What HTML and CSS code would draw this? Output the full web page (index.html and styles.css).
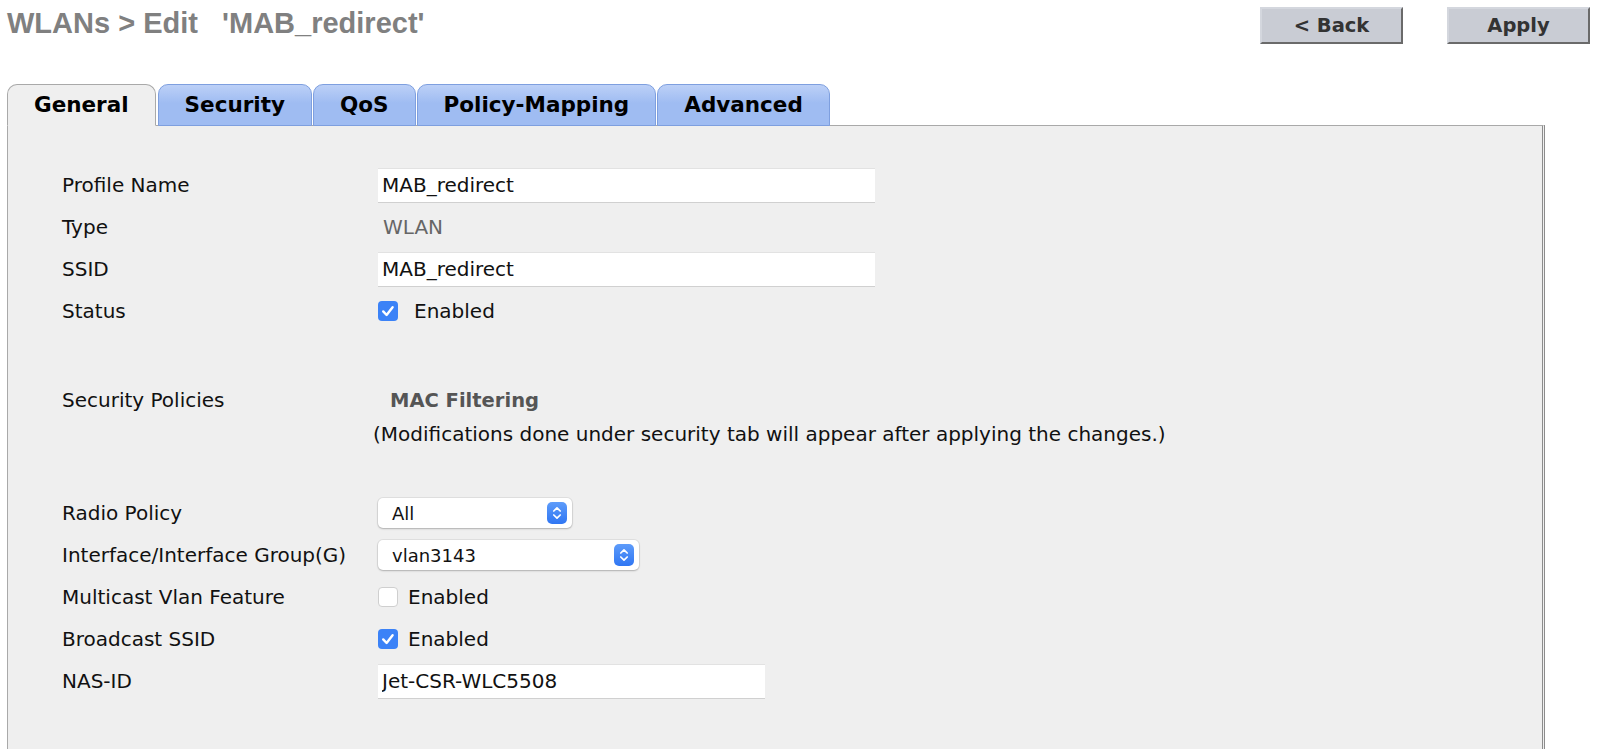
FILE: index.html
```html
<!DOCTYPE html>
<html lang="en">
<head>
    <meta charset="UTF-8">
    <meta name="viewport" content="width=device-width, initial-scale=1.0">
    <title>WLANs &gt; Edit</title>
    <link rel="stylesheet" href="styles.css">
</head>
<body>

    <!-- Page header -->
    <div class="header">
        <h1 class="title">WLANs &gt; Edit&nbsp;&nbsp;&nbsp;'MAB_redirect'</h1>
        <div class="actions">
            <button class="btn">&lt; Back</button>
            <button class="btn">Apply</button>
        </div>
    </div>

    <!-- Tabs -->
    <div class="tabs">
        <div class="tab active">General</div>
        <div class="tab">Security</div>
        <div class="tab">QoS</div>
        <div class="tab">Policy-Mapping</div>
        <div class="tab">Advanced</div>
    </div>

    <!-- General tab content -->
    <div class="panel">
        <div class="row">
            <div class="label">Profile Name</div>
            <div class="value"><input class="field" type="text" value="MAB_redirect"></div>
        </div>
        <div class="row">
            <div class="label">Type</div>
            <div class="value"><span class="static">WLAN</span></div>
        </div>
        <div class="row">
            <div class="label">SSID</div>
            <div class="value"><input class="field" type="text" value="MAB_redirect"></div>
        </div>
        <div class="row">
            <div class="label">Status</div>
            <div class="value check-wrap wide">
                <span class="check on">
                    <svg width="20" height="20" viewBox="0 0 20 20"><path d="M5.2 10.4 L8.6 14 L14.6 6.2" fill="none" stroke="#fff" stroke-width="2.4" stroke-linecap="round" stroke-linejoin="round"/></svg>
                </span>
                <span>Enabled</span>
            </div>
        </div>

        <div class="row policies">
            <div class="label">Security Policies</div>
            <div class="value"><span class="policy">MAC Filtering</span></div>
        </div>
        <div class="note">(Modifications done under security tab will appear after applying the changes.)</div>

        <div class="row first-after-note">
            <div class="label">Radio Policy</div>
            <div class="value">
                <div class="select short">
                    <span>All</span>
                    <span class="arrows">
                        <svg width="20" height="22" viewBox="0 0 20 22"><path d="M6.8 9 L10 5.8 L13.2 9 M6.8 13 L10 16.2 L13.2 13" fill="none" stroke="#fff" stroke-width="1.7" stroke-linecap="round" stroke-linejoin="round"/></svg>
                    </span>
                </div>
            </div>
        </div>
        <div class="row">
            <div class="label">Interface/Interface Group(G)</div>
            <div class="value">
                <div class="select long">
                    <span>vlan3143</span>
                    <span class="arrows">
                        <svg width="20" height="22" viewBox="0 0 20 22"><path d="M6.8 9 L10 5.8 L13.2 9 M6.8 13 L10 16.2 L13.2 13" fill="none" stroke="#fff" stroke-width="1.7" stroke-linecap="round" stroke-linejoin="round"/></svg>
                    </span>
                </div>
            </div>
        </div>
        <div class="row">
            <div class="label">Multicast Vlan Feature</div>
            <div class="value check-wrap">
                <span class="check"></span>
                <span>Enabled</span>
            </div>
        </div>
        <div class="row">
            <div class="label">Broadcast SSID</div>
            <div class="value check-wrap">
                <span class="check on">
                    <svg width="20" height="20" viewBox="0 0 20 20"><path d="M5.2 10.4 L8.6 14 L14.6 6.2" fill="none" stroke="#fff" stroke-width="2.4" stroke-linecap="round" stroke-linejoin="round"/></svg>
                </span>
                <span>Enabled</span>
            </div>
        </div>
        <div class="row">
            <div class="label">NAS-ID</div>
            <div class="value"><input class="field nas" type="text" value="Jet-CSR-WLC5508"></div>
        </div>
    </div>

</body>
</html>
```

FILE: styles.css
```css
/* Basic Layout */
body {
    margin: 0;
    background: #fff;
    font-family: "DejaVu Sans", Verdana, sans-serif;
    color: #111;
    overflow: hidden;
}

/* Header */
.header {
    display: flex;
    justify-content: space-between;
    align-items: flex-start;
    height: 84px;
    padding: 0 10px 0 7px;
}

.title {
    margin: 0;
    padding-top: 7px;
    font-family: "Liberation Sans", Arial, sans-serif;
    font-size: 29px;
    line-height: 32px;
    font-weight: bold;
    color: #808080;
}

.actions {
    display: flex;
    gap: 44px;
    margin-top: 7px;
}

.btn {
    width: 143px;
    height: 37px;
    background: #c9ccd4;
    border: 2px solid;
    border-color: #d4d7de #6a6a6a #6a6a6a #d4d7de;
    font-family: "DejaVu Sans", Verdana, sans-serif;
    font-size: 19.5px;
    font-weight: bold;
    color: #333;
    padding: 0;
    cursor: pointer;
}

/* Tabs */
.tabs {
    display: flex;
    align-items: flex-end;
    gap: 1px;
    margin-left: 7px;
    margin-bottom: -1px;
    position: relative;
    z-index: 1;
}

.tab {
    height: 40px;
    line-height: 40px;
    padding: 0 26px;
    font-size: 21.5px;
    font-weight: bold;
    color: #000;
    border: 1px solid #7e9fdf;
    border-radius: 10px 10px 0 0;
    background: linear-gradient(#bcd0f7, #9fbcf2 45%);
}

.tab.active {
    background: #efefef;
    border-color: #a9a9a9;
    border-bottom-color: #efefef;
    padding: 0 26px;
    margin-right: 1px;
}

/* Panel */
.panel {
    box-sizing: border-box;
    margin-left: 7px;
    width: 1538px;
    height: 800px;
    background: #efefef;
    border-top: 1px solid #a9a9a9;
    border-left: 1px solid #a9a9a9;
    border-right: 3px double #8c8c8c;
    padding: 38px 0 0 54px;
    font-size: 20px;
}

.row {
    display: grid;
    grid-template-columns: 316px 1fr;
    align-items: center;
    height: 42px;
}

.label {
    color: #111;
}

.value {
    display: flex;
    align-items: center;
}

.static {
    color: #666;
    padding-left: 5px;
}

.field {
    width: 497px;
    height: 35px;
    box-sizing: border-box;
    padding: 0 4px;
    border: none;
    border-top: 1px solid #e2e2e2;
    border-bottom: 1px solid #d0d0d0;
    background: #fff;
    font-family: "DejaVu Sans", Verdana, sans-serif;
    font-size: 20px;
    color: #111;
    outline: none;
}

.field.nas {
    width: 387px;
}

/* Checkboxes */
.check-wrap {
    gap: 10px;
}

.check-wrap.wide {
    gap: 16px;
}

.check {
    width: 20px;
    height: 20px;
    box-sizing: border-box;
    border-radius: 4px;
    background: #fff;
    border: 1px solid #cfcfcf;
    display: flex;
}

.check.on {
    background: #3b82f7;
    border: none;
}

/* Security policies */
.policies {
    margin-top: 47px;
}

.policy {
    padding-left: 12px;
    font-weight: bold;
    font-size: 19.5px;
    color: #555;
}

.note {
    height: 26px;
    line-height: 26px;
    margin-left: 311px;
}

/* Select boxes */
.first-after-note {
    margin-top: 45px;
}

.select {
    display: flex;
    justify-content: space-between;
    align-items: center;
    height: 30px;
    box-sizing: border-box;
    padding: 0 5px 0 14px;
    background: #fff;
    border-radius: 5px;
    box-shadow: 0 0 0 1px rgba(0, 0, 0, 0.06), 0 1px 2px rgba(0, 0, 0, 0.22);
    font-size: 18px;
}

.select.short {
    width: 194px;
}

.select.long {
    width: 261px;
}

.arrows {
    width: 20px;
    height: 22px;
    border-radius: 5px;
    background: linear-gradient(#5e9cfa, #2f76f3);
    display: flex;
}
```
